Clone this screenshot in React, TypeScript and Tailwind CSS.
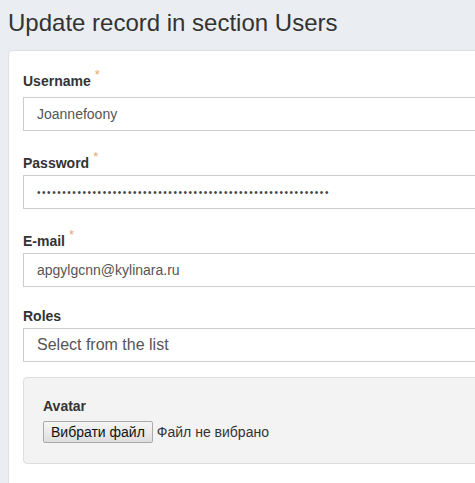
const Label = ({ text, required }: { text: string; required?: boolean }) => (
  <div className="flex items-start h-[18px] text-[14px] font-bold text-[#333] leading-[18px]">
    {text}
    {required && <span className="ml-[4px] -mt-[6px] text-[13px] font-normal text-[#e8a76a]">*</span>}
  </div>
);

const Field = ({ children }: { children: React.ReactNode }) => (
  <div className="h-[34px] border border-[#ccc] bg-white flex items-center pl-[13px] text-[#555] text-[14px] whitespace-nowrap overflow-hidden">
    {children}
  </div>
);

export default function App() {
  return (
    <div
      className="w-[475px] h-[483px] overflow-hidden bg-[#eaedf1] pl-[8px]"
      style={{ fontFamily: '"Liberation Sans", Arial, sans-serif' }}
    >
      <h1 className="pt-[9px] h-[50px] text-[24px] leading-[28px] text-[#333] font-normal">
        Update record in section Users
      </h1>
      <div className="bg-white border border-[#dcdfe3] rounded-tl-[4px] w-[500px] h-[460px] pl-[14px] pt-[21px]">
        <Label text="Username" required />
        <div className="mt-[7px]">
          <Field>Joannefoony</Field>
        </div>
        <div className="mt-[23px]">
          <Label text="Password" required />
        </div>
        <div className="mt-[3px]">
          <Field>
            <span className="text-[#444] text-[10px] tracking-[1.55px]">
              {"•".repeat(58)}
            </span>
          </Field>
        </div>
        <div className="mt-[23px]">
          <Label text="E-mail" required />
        </div>
        <div className="mt-[3px]">
          <Field>apgylgcnn@kylinara.ru</Field>
        </div>
        <div className="mt-[20px]">
          <Label text="Roles" />
        </div>
        <div className="mt-[3px]">
          <div className="h-[34px] border border-[#ccc] bg-white flex items-center pl-[13px] text-[#555] text-[16px]">
            Select from the list
          </div>
        </div>
        <div className="mt-[15px] h-[87px] bg-[#f3f3f3] border border-[#dedede] rounded-[4px] pl-[19px] pt-[19px]">
          <div className="text-[14px] font-bold text-[#333] leading-[18px]">Avatar</div>
          <div className="mt-[6px] flex items-center text-[14px] text-[#222]">
            <button className="h-[22px] px-[7px] border border-[#a9a9a9] bg-gradient-to-b from-[#f6f6f6] to-[#dedede] rounded-[2px] text-[14px] text-[#111] leading-[20px]">
              Вибрати файл
            </button>
            <span className="ml-[4px] text-[#333]">Файл не вибрано</span>
          </div>
        </div>
      </div>
    </div>
  );
}
